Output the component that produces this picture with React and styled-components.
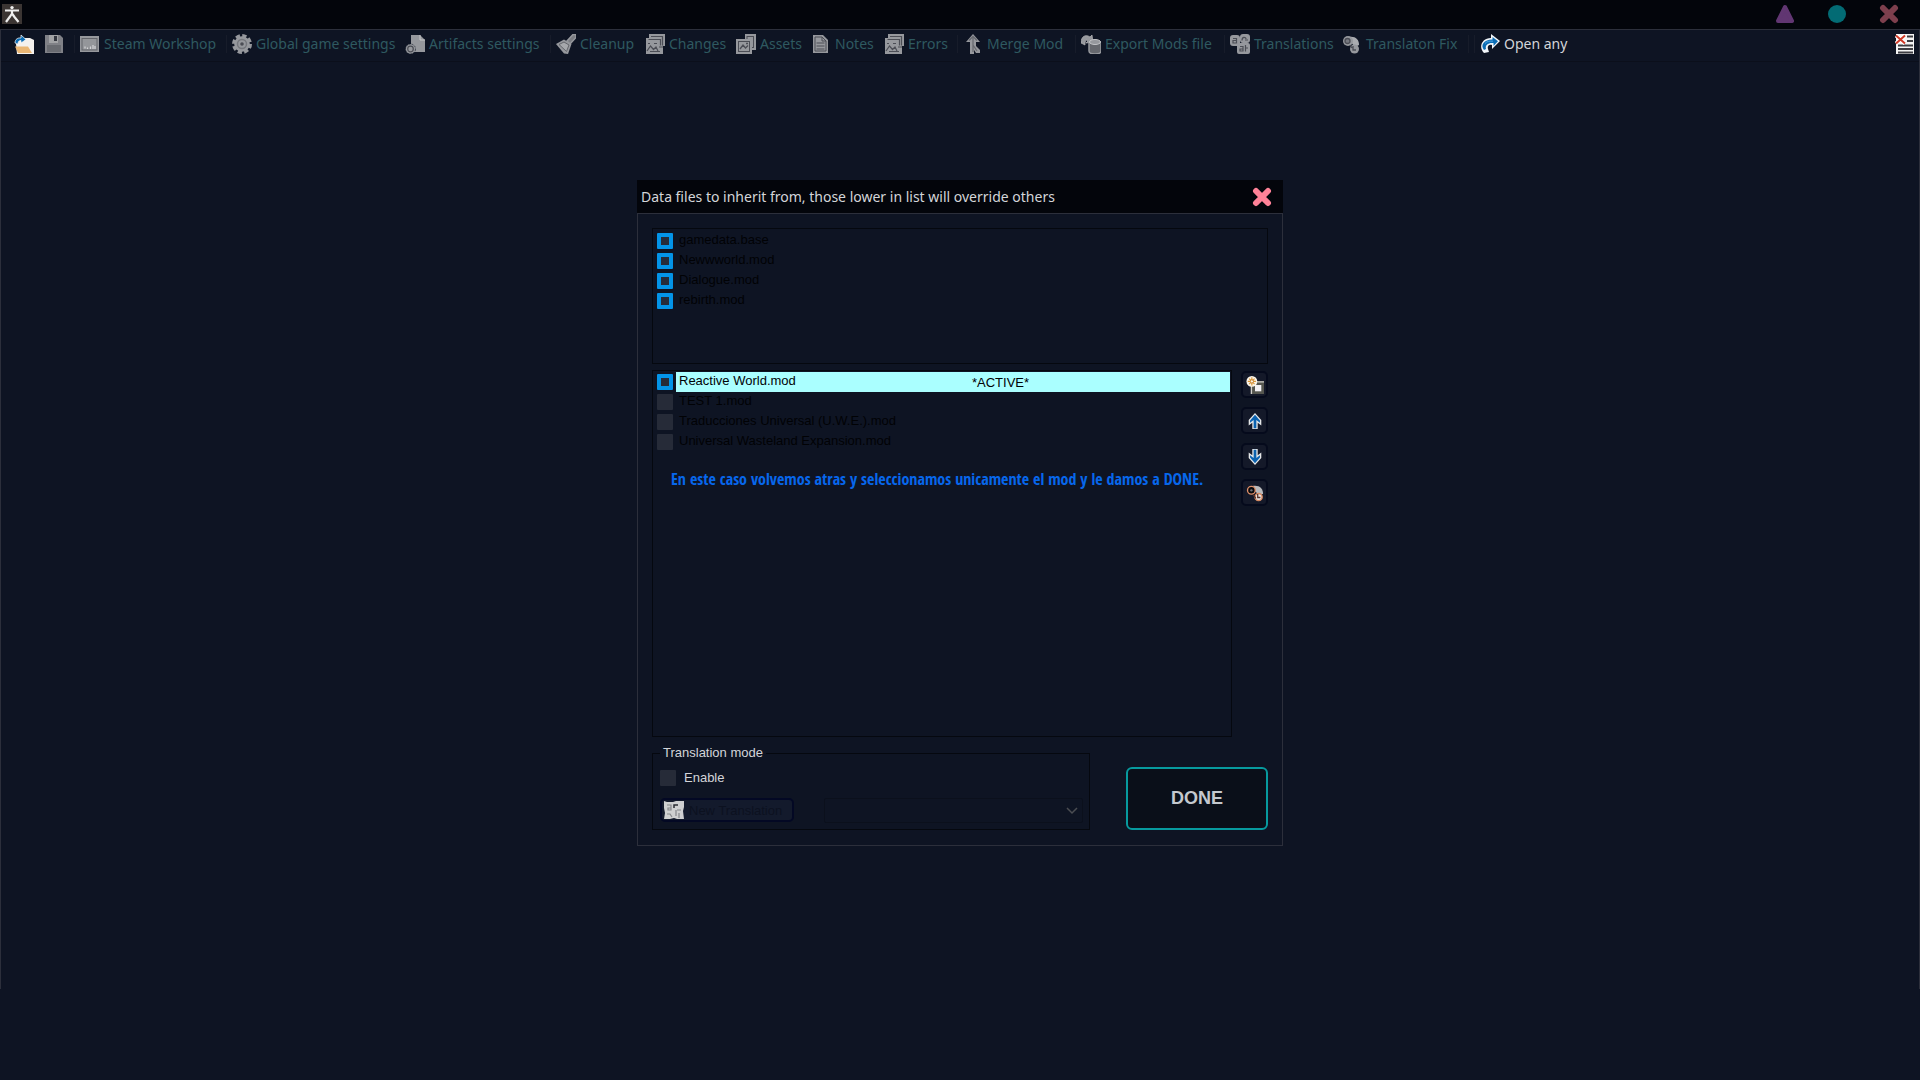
import React from 'react'
import styled, { createGlobalStyle, css } from 'styled-components'

const colors = {
    bg: '#0e1423',
    title: '#03050b',
    line: '#2c2f3b',
    inset: '#05080f',
    teal: '#2e5960',
    light: '#d3d5d9',
    gray: '#96989d',
    dark: '#4b4d55',
    blue: '#0394e8',
}

const g = colors.gray
const d = colors.dark

//================================ICONS===============================
const icons = {
    app: (
        <>
            <rect width="20" height="20" fill="#3b3533" />
            <circle cx="10" cy="3.6" r="1.7" fill="#eee" />
            <path d="M3 6.5h14M10 6v4M10 9.5L8 12.5 4 18M10 9.5l2.5 3.5 4 5" stroke="#eee" strokeWidth="2.2" fill="none" />
        </>
    ),
    open: (
        <>
            <path d="M2 10h2V6l5-2h7l4 2v14H3z" fill="#f4f1ee" />
            <path d="M1 12.5h13l4 6.5H4z" fill="#eab775" />
            <path d="M1 9C1 5 4 3.5 7 4V1l5 4.5L7 9V6.5C5 6.5 4 7.5 4 10z" fill="#0b6cb4" stroke="#fff" strokeWidth=".7" />
        </>
    ),
    save: (
        <>
            <path d="M1 1h15l3 3v15H1z" fill="#808187" />
            <rect x="5" y="1" width="9" height="8" fill="#a2a3a6" />
            <rect x="10" y="2" width="3" height="5" fill="#33363f" />
            <rect x="3" y="11" width="14" height="7" fill="#696b71" />
        </>
    ),
    steam: (
        <>
            <rect y="2" width="19" height="16" fill={g} />
            <rect x="2" y="4.5" width="15" height="11.5" fill="#94969a" stroke="#62646a" />
            <path d="M5 14.5v-2M7.5 15v-1.5M10.5 15v-2.5M13 15v-4M15 15v-3" stroke="#d4d5d7" strokeWidth="1.2" />
        </>
    ),
    gear: (
        <>
            <circle cx="10" cy="10" r="8.3" fill="none" stroke={g} strokeWidth="3.4" strokeDasharray="4.2 2.32" />
            <circle cx="10" cy="10" r="7.8" fill={g} />
            <circle cx="10" cy="10" r="4.5" fill="none" stroke="#75777d" strokeWidth="1.5" />
            <circle cx="10" cy="10" r="1.8" fill={d} />
        </>
    ),
    artifacts: (
        <>
            <path d="M6 1h9l5 5v12H6z" fill={g} />
            <path d="M15 1v5h5" fill="none" stroke="#c6c7c9" />
            <circle cx="5.5" cy="15" r="5" fill={g} stroke={colors.bg} strokeWidth=".6" strokeDasharray="2 1" />
            <circle cx="5.5" cy="15" r="2.8" fill="none" stroke={d} strokeWidth="1.2" />
        </>
    ),
    cleanup: (
        <>
            <path d="M11 7l6-6.5h3v3L14 10z" fill="#7a7c82" stroke={g} strokeWidth="1.5" />
            <path d="M0 10l8-4.5L15.5 10 12 20 8 19.5z" fill={g} />
            <path d="M3 10.5l5-2.5 5 3-2.5 6.5z" fill="#a6a8ac" stroke="#63656b" />
        </>
    ),
    stack: (
        <>
            <path d="M4 0h16v12h-2v8H1V4h3z" fill={g} />
            <path d="M6 2.5h11.5v9M3.5 5.5h12v6M3 9.5h2M9 9.5h3M2 17l3.5-5 3 3.5L11 13l2 4M14 13h4M5 17.5h10" fill="none" stroke={d} strokeWidth="1.2" />
        </>
    ),
    assets: (
        <>
            <path d="M9 0h11v16H9z" fill={g} />
            <rect x="11" y="2.5" width="6.5" height="11" fill={g} stroke={d} />
            <rect y="5" width="16" height="15" fill={g} />
            <rect x="2.5" y="7.5" width="11" height="10" fill="none" stroke={d} />
            <path d="M4 15l3-4 2.5 3L12 11.5M10 9.5h2" fill="none" stroke={d} strokeWidth="1.3" />
        </>
    ),
    notes: (
        <>
            <path d="M2 1h10l5 5v13H2z" fill={g} />
            <path d="M4 3h7l4 4v10H4zM11 3v4h4M5.5 9h8M5.5 12h8M5.5 15h8" fill="none" stroke={d} />
        </>
    ),
    merge: (
        <>
            <path d="M10 0l7 8h-4v4l4 4v3h-4l-2-3v4H7V8H3z" fill={g} />
            <path d="M10 2.5V18M10 11l4 6M6 6.5l4-4 4 4" fill="none" stroke="#686a70" strokeWidth="1.3" />
        </>
    ),
    exporting: (
        <>
            <path d="M0 9C0 2 5 0 9 3l2-2 1 7-7 1 2-2C5 5 4 7 4 11z" fill={g} stroke="#b4b5b8" strokeWidth=".7" />
            <path d="M8 8v9c0 4 12 4 12 0V8z" fill="#66686e" stroke={g} strokeWidth="1.5" />
            <ellipse cx="14" cy="8" rx="5.5" ry="2.5" fill={g} stroke="#c3c4c7" />
        </>
    ),
    translations: (
        <>
            <rect y="1" width="10" height="11" rx="3" fill={g} />
            <rect x="10" width="10" height="9" rx="3" fill={g} />
            <rect x="7" y="9" width="13" height="11" rx="2" fill={g} />
            <path d="M3 4.5h3.5v4.5H3V6.5h3M12 6.5C12 2 16 3 16 5M15 6h3M10 12.5h3v4.5h-3v-2h3M15.5 11v6.500M15 14h3" fill="none" stroke={d} strokeWidth="1.2" />
        </>
    ),
    translationFix: (
        <>
            <path d="M7 3c6-1 10 2 10 8l-4 2-5-6z" fill="#aaacb0" />
            <circle cx="6" cy="7" r="5" fill={g} />
            <circle cx="5.5" cy="7" r="2.5" fill="#777980" stroke={d} strokeWidth="1.3" />
            <circle cx="12.5" cy="15" r="4.5" fill={g} />
            <path d="M11 12v4h3M8 11l2 3" fill="none" stroke={d} strokeWidth="1.3" />
        </>
    ),
    openAny: (
        <>
            <path d="M4 19C-2 13 2 4 11 4V0l9 7-8 8v-4c-3-1-5 1-4 4l1 3z" fill="#f2f6fa" />
            <path d="M4 16C0 11 4 5.500 12.500 5.500V3L18 7.300 13.500 12V9C8 8.500 5 11 6 15z" fill="#0b6cb4" />
            <path d="M5 9.500C7 7 10 7 13 7.200" fill="none" stroke="#4aa6e4" />
        </>
    ),
    clearList: (
        <>
            <rect x="1" width="18" height="20" fill="#f4f4f4" />
            <path d="M12 2.5h6M12 7h6M3 11.5h15M3 15h15M3 18.5h15" stroke="#3d3d42" strokeWidth="2" />
            <path d="M1 1.5l9 8M10 1.5l-9 8" stroke="#fff" strokeWidth="4" />
            <path d="M1 1.5l9 8M10 1.5l-9 8" stroke="#cf3a28" strokeWidth="2" />
        </>
    ),
    triangle: <path d="M10 3L17 17H3z" fill="#613672" stroke="#613672" strokeWidth="4" strokeLinejoin="round" />,
    circle: <circle cx="10" cy="10" r="9" fill="#036b74" />,
    cross: <path d="M4 4l12 12M16 4L4 16" stroke="currentColor" strokeWidth="6" strokeLinecap="round" />,
    newMod: (
        <>
            <path d="M6 6h14v14H6z" fill="#55564f" />
            <path d="M6 20V8M9 6.5h11" stroke="#d2d0ca" strokeWidth="1.5" />
            <rect x="10" y="10" width="7" height="7" fill="#f4f2f6" />
            <circle cx="6.5" cy="6" r="6" fill="#fbf5ea" />
            <path d="M6.5 1.5v9M2 6h9M3.5 3l6 6M9.5 3l-6 6" stroke="#dd9a3c" strokeWidth="1.3" />
            <circle cx="6.5" cy="6" r="1.8" fill="#fbf5ea" stroke="#c77d20" />
        </>
    ),
    up: (
        <>
            <path d="M10 1l7 8v6l-4-3v7H7v-7l-4 3V9z" fill="#e4e6e8" />
            <path d="M10 3l5.5 6.5V12l-4-3v9h-3V9l-4 3V9.5z" fill="#0b62b0" />
        </>
    ),
    down: (
        <>
            <path d="M10 19l7-8V5l-4 3V1H7v7L3 5v6z" fill="#e4e6e8" />
            <path d="M10 17l5.5-6.5V8l-4 3V2h-3v9l-4-3v2.5z" fill="#0b62b0" />
        </>
    ),
    swap: (
        <>
            <path d="M8 2c7-1 11 3 11 9l-5 1-5-5z" fill="#b9babd" />
            <circle cx="6" cy="7" r="4.3" fill="#08090d" stroke="#e0906a" strokeWidth="1.5" />
            <circle cx="6" cy="7" r="1.3" fill="#6d7078" />
            <circle cx="14" cy="14.5" r="4" fill="#e8e2e0" stroke="#d58860" strokeWidth="1.6" />
            <path d="M13 11v4h3M8 12l3 4" fill="none" stroke="#54322a" strokeWidth="1.4" />
        </>
    ),
    newTranslation: (
        <>
            <path d="M0 1l3 1h6l3-1h8v6l-1 4 1 8h-7l-3-1-4 1H0l1-6-1-5z" fill="#cfd0d1" />
            <path d="M3 5h4v5H4V8h3M13 10h4M12 10v6M3 14h3l2 3M15 13v5" fill="none" stroke="#85878b" strokeWidth="1.2" />
            <path d="M10 8V5h4" fill="none" stroke="#2b2d33" strokeWidth="1.5" />
        </>
    ),
}

const Icon = ({ name, size = 20 }) => (
    <IconBox $size={size} viewBox="0 0 20 20" aria-hidden="true">{icons[name]}</IconBox>
)

const tools = [
    { icon: 'steam', text: 'Steam Workshop', w: 146, sep: true },
    { icon: 'gear', text: 'Global game settings', w: 173 },
    { icon: 'artifacts', text: 'Artifacts settings', w: 145, sep: true },
    { icon: 'cleanup', text: 'Cleanup', w: 89 },
    { icon: 'stack', text: 'Changes', w: 91 },
    { icon: 'assets', text: 'Assets', w: 75 },
    { icon: 'notes', text: 'Notes', w: 73 },
    { icon: 'stack', text: 'Errors', w: 73, sep: true },
    { icon: 'merge', text: 'Merge Mod', w: 112, sep: true },
    { icon: 'exporting', text: 'Export Mods file', w: 143, sep: true },
    { icon: 'translations', text: 'Translations', w: 112 },
    { icon: 'translationFix', text: 'Translaton Fix', w: 126, sep: true },
]

const baseFiles = ['gamedata.base', 'Newwworld.mod', 'Dialogue.mod', 'rebirth.mod']

const mods = [
    { name: 'Reactive World.mod', active: true },
    { name: 'TEST 1.mod' },
    { name: 'Traducciones Universal (U.W.E.).mod' },
    { name: 'Universal Wasteland Expansion.mod' },
]

const sideButtons = [
    { icon: 'newMod', label: 'New mod' },
    { icon: 'up', label: 'Move up' },
    { icon: 'down', label: 'Move down' },
    { icon: 'swap', label: 'Replace' },
]

const FileRow = ({ id, name, checked, active }) => (
    <Row>
        <Check id={id} defaultChecked={checked} />
        <RowLabel htmlFor={id} $active={active}>
            <span>{name}</span>
            {active && <Status>*ACTIVE*</Status>}
        </RowLabel>
    </Row>
)

const Toolbar = () => (
    <Bar>
        <Tool $w={30} aria-label="Open"><Icon name="open" /></Tool>
        <Tool $w={30} aria-label="Save"><Icon name="save" /></Tool>
        <Separator />
        {tools.map((tool) => (
            <React.Fragment key={tool.text}>
                <Tool $w={tool.w}>
                    <Icon name={tool.icon} />
                    {tool.text}
                </Tool>
                {tool.sep && <Separator />}
            </React.Fragment>
        ))}
        <Separator />
        <Tool $w={92} $bright>
            <Icon name="openAny" />
            Open any
        </Tool>
        <Spacer />
        <Tool $w={20} aria-label="Clear list"><Icon name="clearList" /></Tool>
    </Bar>
)

const Dialog = () => (
    <DialogBox role="dialog" aria-labelledby="dialog-title">
        <DialogHeader>
            <DialogTitle id="dialog-title">
                Data files to inherit from, those lower in list will override others
            </DialogTitle>
            <Control $color="#ff8298" aria-label="Close dialog"><Icon name="cross" /></Control>
        </DialogHeader>
        <DialogBody>
            <FileList $h={136} $top={2}>
                {baseFiles.map((name, index) => (
                    <FileRow key={name} id={'base' + index} name={name} checked />
                ))}
            </FileList>
            <Columns>
                <ModPanel>
                    <FileList $h={367} $top={1}>
                        {mods.map((mod, index) => (
                            <FileRow
                                key={mod.name}
                                id={'mod' + index}
                                name={mod.name}
                                checked={mod.active}
                                active={mod.active}
                            />
                        ))}
                        <Note>
                            En este caso volvemos atras y seleccionamos unicamente el mod y le damos a DONE.
                        </Note>
                    </FileList>
                </ModPanel>
                <SideBar>
                    {sideButtons.map((btn) => (
                        <SideButton key={btn.icon} aria-label={btn.label}>
                            <Icon name={btn.icon} size={18} />
                        </SideButton>
                    ))}
                </SideBar>
            </Columns>
            <Footer>
                <Group>
                    <Legend>Translation mode</Legend>
                    <EnableRow>
                        <Check id="enable" />
                        <label htmlFor="enable">Enable</label>
                    </EnableRow>
                    <GroupRow>
                        <NewButton disabled>
                            <Icon name="newTranslation" />
                            New Translation
                        </NewButton>
                        <SelectBox>
                            <Select disabled aria-label="Translation" />
                            <Chevron viewBox="0 0 12 8" aria-hidden="true">
                                <path d="M1 1l5 5 5-5" fill="none" stroke="#4b4d52" strokeWidth="1.5" />
                            </Chevron>
                        </SelectBox>
                    </GroupRow>
                </Group>
                <DoneButton>DONE</DoneButton>
            </Footer>
        </DialogBody>
    </DialogBox>
)

const App = () => (
    <>
        <GlobalStyle />
        <TitleBar>
            <Icon name="app" />
            <Controls>
                <Control aria-label="Minimize"><Icon name="triangle" /></Control>
                <Control aria-label="Maximize"><Icon name="circle" /></Control>
                <Control $color="#7d3f4d" aria-label="Close"><Icon name="cross" /></Control>
            </Controls>
        </TitleBar>
        <Window>
            <Toolbar />
            <Workspace>
                <Dialog />
            </Workspace>
        </Window>
    </>
)

export default App

//================================STYLES===============================
const GlobalStyle = createGlobalStyle`
    * {
        box-sizing: border-box;
    }
    body {
        margin: 0;
        background: ${colors.bg};
        color: ${colors.light};
        font-family: "Liberation Sans", Arial, sans-serif;
        font-size: 13px;
    }
    button {
        padding: 0;
        border: none;
        background: none;
        color: inherit;
        font: inherit;
    }
`

const IconBox = styled.svg`
    display: block;
    flex: none;
    width: ${props => props.$size}px;
    height: ${props => props.$size}px;
`

const TitleBar = styled.header`
    display: flex;
    align-items: center;
    justify-content: space-between;
    height: 29px;
    padding: 0 21px 1px 2px;
    background: ${colors.title};
`

const Controls = styled.div`
    display: flex;
    gap: 32px;
`

const Control = styled.button`
    color: ${props => props.$color};
`

const Window = styled.main`
    min-height: calc(100vh - 120px);
    border: 1px solid ${colors.line};
    border-bottom: none;
`

const Bar = styled.nav`
    display: flex;
    align-items: center;
    height: 32px;
    padding: 0 4px 4px 13px;
    border-bottom: 1px solid #0b0f1b;
`

const Tool = styled.button`
    display: flex;
    align-items: center;
    gap: 4px;
    width: ${props => props.$w}px;
    height: 20px;
    color: ${colors.teal};
    font-family: "Noto Sans", "Open Sans", sans-serif;
    font-size: 14px;
    line-height: 18px;
    white-space: nowrap;

    ${props => props.$bright && css`
        color: ${colors.light};
    `}
`

const Separator = styled.span`
    flex: none;
    width: 1px;
    height: 18px;
    margin-right: 5px;
    background: #171c2a;
`

const Spacer = styled.div`
    flex: 1;
`

const Workspace = styled.section`
    display: flex;
    justify-content: center;
    padding-top: 118px;
`

const DialogBox = styled.div`
    width: 100%;
    max-width: 646px;
`

const DialogHeader = styled.div`
    display: flex;
    align-items: center;
    justify-content: space-between;
    height: 33px;
    padding: 0 11px 0 4px;
    background: ${colors.title};
`

const DialogTitle = styled.h1`
    margin: 0;
    font-family: "Noto Sans", "Open Sans", sans-serif;
    font-size: 14px;
    font-weight: 400;
`

const DialogBody = styled.div`
    padding: 14px 14px 15px;
    border: 1px solid ${colors.line};
`

const FileList = styled.ul`
    min-height: ${props => props.$h}px;
    margin: 0;
    padding: ${props => props.$top}px 1px 0 4px;
    border: 1px solid ${colors.inset};
    list-style: none;
`

const Row = styled.li`
    display: flex;
    align-items: center;
    gap: 3px;
    height: 20px;
`

const RowLabel = styled.label`
    display: grid;
    grid-template-columns: 293px 1fr;
    flex: 1;
    height: 20px;
    padding-left: 3px;
    color: #010205;
    line-height: 18px;
    white-space: nowrap;

    ${props => props.$active && css`
        background: #aaffff;
    `}
`

const Status = styled.span`
    line-height: 22px;
`

const Check = styled.input.attrs({ type: 'checkbox' })`
    flex: none;
    width: 16px;
    height: 16px;
    margin: 0;
    appearance: none;
    border-radius: 1px;
    background: #262b38;

    &:checked {
        border: 4px solid ${colors.blue};
    }
`

const Note = styled.p`
    margin: 15px 14px;
    color: #0767ec;
    font-family: "Open Sans Condensed", "Liberation Sans Narrow", "Open Sans", sans-serif;
    font-size: 16px;
    font-weight: 700;
    line-height: 24px;
    white-space: nowrap;
`

const Columns = styled.div`
    display: flex;
    gap: 9px;
    margin-top: 6px;
`

const ModPanel = styled.div`
    flex: 1;
`

const SideBar = styled.div`
    display: flex;
    flex-direction: column;
    gap: 9px;
    padding-top: 1px;
`

const SideButton = styled.button`
    display: grid;
    place-items: center;
    width: 27px;
    height: 27px;
    border: 2px solid #050a1c;
    border-radius: 5px;
    background: #141929;
`

const Footer = styled.div`
    display: flex;
    align-items: flex-end;
    gap: 36px;
    margin-top: 8px;
`

const Group = styled.fieldset`
    flex: 1;
    min-width: 0;
    margin: 0;
    padding: 9px 6px 6px 7px;
    border: 1px solid ${colors.inset};
`

const Legend = styled.legend`
    padding: 0 3px;
    line-height: 16px;
`

const EnableRow = styled.div`
    display: flex;
    align-items: center;
    gap: 8px;
    line-height: 16px;
`

const GroupRow = styled.div`
    display: flex;
    gap: 30px;
    margin-top: 12px;
`

const NewButton = styled.button`
    display: flex;
    align-items: center;
    gap: 5px;
    width: 134px;
    height: 24px;
    padding-left: 2px;
    border: 2px solid #030824;
    border-radius: 5px;
    background: #131a2c;
    color: #0c1120;
    white-space: nowrap;
`

const SelectBox = styled.div`
    position: relative;
    flex: 1;
`

const Select = styled.select`
    display: block;
    width: 100%;
    height: 25px;
    appearance: none;
    border: 1px solid #0a0e19;
    border-radius: 2px;
    background: transparent;
`

const Chevron = styled.svg`
    position: absolute;
    top: 9px;
    right: 5px;
    width: 12px;
    height: 8px;
`

const DoneButton = styled.button`
    width: 142px;
    height: 63px;
    border: 2px solid #079a9e;
    border-radius: 6px;
    background: #0a0f19;
    color: #c4c8ce;
    font-size: 18px;
    font-weight: 700;
`
